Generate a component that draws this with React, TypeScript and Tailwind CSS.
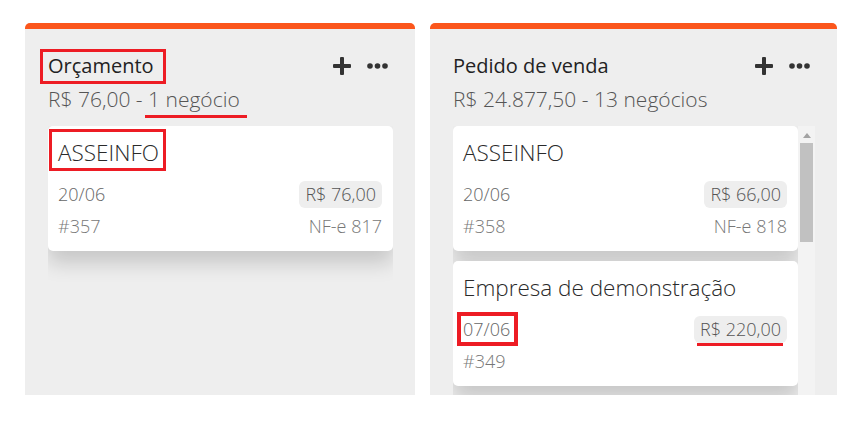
import React from 'react'

type Deal = {
  company: string
  date: string
  amount: string
  code: string
  invoice?: string
  markCompany?: boolean
  markDate?: boolean
  markAmount?: boolean
}

type Stage = {
  title: string
  total: string
  count: string
  width: string
  scroll?: boolean
  markTitle?: boolean
  markCount?: boolean
  deals: Deal[]
}

const stages: Stage[] = [
  {
    title: 'Orçamento',
    total: 'R$ 76,00',
    count: '1 negócio',
    width: 'w-[390px]',
    markTitle: true,
    markCount: true,
    deals: [
      { company: 'ASSEINFO', date: '20/06', amount: 'R$ 76,00', code: '#357', invoice: 'NF-e 817', markCompany: true },
    ],
  },
  {
    title: 'Pedido de venda',
    total: 'R$ 24.877,50',
    count: '13 negócios',
    width: 'w-[407px]',
    scroll: true,
    deals: [
      { company: 'ASSEINFO', date: '20/06', amount: 'R$ 66,00', code: '#358', invoice: 'NF-e 818' },
      { company: 'Empresa de demonstração', date: '07/06', amount: 'R$ 220,00', code: '#349', markDate: true, markAmount: true },
    ],
  },
]

function PlusIcon() {
  return (
    <svg width="18" height="18" viewBox="0 0 18 18" fill="#333">
      <rect x="7" y="0" width="4" height="18" rx="1" />
      <rect x="0" y="7" width="18" height="4" rx="1" />
    </svg>
  )
}

function DotsIcon() {
  return (
    <svg width="21" height="6" viewBox="0 0 21 6" fill="#333">
      <circle cx="3" cy="3" r="2.8" />
      <circle cx="10.5" cy="3" r="2.8" />
      <circle cx="18" cy="3" r="2.8" />
    </svg>
  )
}

function DealCard({ deal }: { deal: Deal }) {
  return (
    <div className="bg-white rounded-[5px] pl-[10px] pr-[11px] pt-[12px] pb-[13px] shadow-[0_12px_20px_rgba(0,0,0,0.17)]">
      <div className="text-[22.5px] leading-[30px] font-light text-[#2a2a2a]">
        <span className="relative">
          {deal.company}
          {deal.markCompany && (
            <span className="absolute -left-[9px] -right-[7px] -top-[8px] -bottom-[3px] border-[3px] border-[#ed1c24]" />
          )}
        </span>
      </div>
      <div className="mt-[13px] flex items-center justify-between h-[27px] text-[18px] font-light text-[#666]">
        <span className="relative">
          {deal.date}
          {deal.markDate && (
            <span className="absolute -left-[6px] -right-[8px] -top-[4px] -bottom-[3px] border-[4px] border-[#ed1c24]" />
          )}
        </span>
        <span className="relative h-[27px] leading-[27px] px-[6px] rounded-[6px] bg-[#eeeeee] text-[#555]">
          {deal.amount}
          {deal.markAmount && (
            <span className="absolute left-[3px] right-[4px] top-full h-[3px] bg-[#ed1c24]" />
          )}
        </span>
      </div>
      <div className="mt-[6px] flex items-center justify-between leading-[24px] text-[18px] font-light text-[#777]">
        <span>{deal.code}</span>
        {deal.invoice && <span>{deal.invoice}</span>}
      </div>
    </div>
  )
}

function StageColumn({ stage }: { stage: Stage }) {
  return (
    <div className={`${stage.width} h-[372px] flex flex-col rounded-t-[5px] border-t-[6px] border-[#fb561c] bg-[#eeeeee] overflow-hidden`}>
      <div className="pl-[23px] pr-[27px] pt-[23px]">
        <div className="flex items-center justify-between h-[28px]">
          <span className="relative text-[20px] leading-[28px] text-[#222]">
            {stage.title}
            {stage.markTitle && (
              <span className="absolute -left-[8px] -right-[12px] -top-[3px] -bottom-[4px] border-[3px] border-[#ed1c24]" />
            )}
          </span>
          <div className="flex items-center gap-[16px]">
            <PlusIcon />
            <DotsIcon />
          </div>
        </div>
        <div className="mt-[5px] text-[21px] leading-[28px] font-light text-[#555]">
          {stage.total} -{' '}
          <span className="relative">
            {stage.count}
            {stage.markCount && (
              <span className="absolute -left-[3px] -right-[7px] top-full mt-[2px] h-[3px] bg-[#ed1c24]" />
            )}
          </span>
        </div>
      </div>
      <div className="mt-[13px] pl-[23px] flex flex-1 min-h-0">
        <div className="w-[345px] flex flex-col gap-[10px] overflow-hidden">
          {stage.deals.map((d, i) => (
            <DealCard key={i} deal={d} />
          ))}
        </div>
        {stage.scroll && (
          <div className="w-[17px] bg-[#f3f3f3] flex flex-col items-center">
            <svg width="8" height="5" viewBox="0 0 8 5" className="mt-[7px]" fill="#a3a3a3">
              <polygon points="4,0 8,5 0,5" />
            </svg>
            <div className="mt-[5px] w-[13px] h-[99px] bg-[#c1c1c1]" />
          </div>
        )}
      </div>
    </div>
  )
}

export default function App() {
  return (
    <div className="w-[859px] h-[421px] bg-white flex gap-[15px] pl-[25px] pt-[23px]" style={{ fontFamily: '"Open Sans", sans-serif' }}>
      {stages.map((s, i) => (
        <StageColumn key={i} stage={s} />
      ))}
    </div>
  )
}
